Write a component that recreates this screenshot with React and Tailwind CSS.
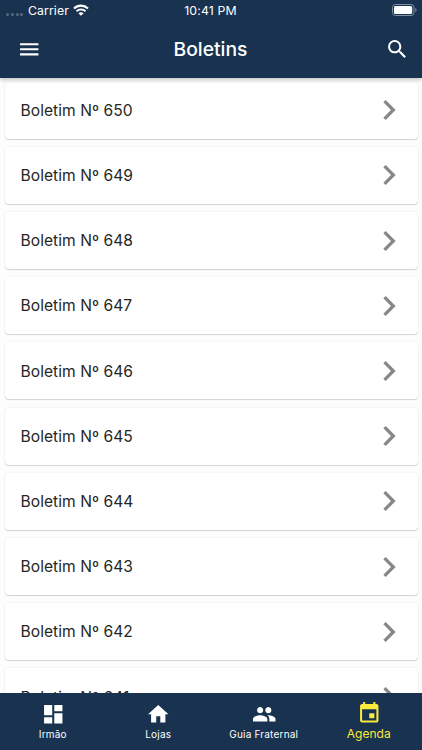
import React from 'react';
import { MdMenu, MdSearch, MdChevronRight, MdDashboard, MdHome, MdPeople, MdEvent } from 'react-icons/md';

const bulletins = [650, 649, 648, 647, 646, 645, 644, 643, 642, 641];

function StatusBar() {
  return (
    <div className="flex h-[21px] items-center justify-between pl-[6px] pr-[5px] text-[12.3px] leading-5">
      <div className="flex w-[130px] items-center">
        <div className="mt-[7px] flex gap-[1.8px]">
          {[0, 1, 2, 3].map((i) => (
            <span key={i} className="size-[3px] rounded-full bg-[#566980]" />
          ))}
        </div>
        <span className="ml-[4.5px] tracking-[0.1px]">Carrier</span>
        <svg className="mb-[1px] ml-[4.5px] h-[12px] w-[16px]" viewBox="0 0 16 12" fill="none" stroke="currentColor">
          <path d="M1 4.4C4.9.65 11.1.65 15 4.4" strokeWidth="2.1" />
          <path d="M3.5 7.2c2.5-2.3 6.5-2.3 9 0" strokeWidth="2" />
          <path d="M8 11.7 5.4 9.2c1.5-1.3 3.7-1.3 5.2 0Z" fill="currentColor" stroke="none" />
        </svg>
      </div>
      <span className="mr-[2px] tracking-[0.15px]">10:41 PM</span>
      <div className="flex w-[130px] justify-end">
        <svg className="mb-[1px] h-[12px] w-[25px]" viewBox="0 0 25 12" fill="none">
          <rect x=".5" y=".5" width="21.5" height="11" rx="3" stroke="#8290a1" />
          <rect x="2" y="2" width="18.2" height="8" rx="1.6" fill="white" />
          <path d="M23.3 4v4c1.6-.5 1.6-3.5 0-4Z" fill="#8290a1" />
        </svg>
      </div>
    </div>
  );
}

function Header() {
  return (
    <header className="relative z-10 h-[77.5px] shrink-0 bg-[#18324f] text-white shadow-[0_2px_4px_rgba(0,0,0,0.22)]">
      <StatusBar />
      <div className="flex h-[56px] items-center justify-between pl-[16.5px] pr-[12.5px]">
        <MdMenu className="size-[24.5px]" />
        <h1 className="mr-[5px] text-[19.3px] font-[460] leading-6">Boletins</h1>
        <MdSearch className="size-[24.5px]" />
      </div>
    </header>
  );
}

function BulletinCard({ number }) {
  return (
    <li className="mx-[4.5px] mb-[8.15px] flex h-[57.05px] shrink-0 items-center justify-between rounded-[4px] bg-white pl-4 pr-[8.5px] shadow-[0_1px_1px_rgba(0,0,0,0.15),0_0_2px_rgba(0,0,0,0.11)]">
      <span className="mt-[1.4px] text-[15.6px] leading-6 tracking-[0.04px] text-[#262626]">Boletim Nº {number}</span>
      <MdChevronRight className="size-10 text-[#888888]" />
    </li>
  );
}

function Tab({ icon: Icon, label, active }) {
  return (
    <button className={active ? 'flex flex-1 flex-col items-center pt-[8.5px] text-[#f9ea3b]' : 'flex flex-1 flex-col items-center pt-[9px] text-white'}>
      <Icon className="size-[24.5px]" />
      <span className={active ? 'mr-[1px] text-[12px] leading-4' : 'text-[10px] leading-4 tracking-[0.2px]'}>{label}</span>
    </button>
  );
}

export default function App() {
  return (
    <div className="flex h-[750px] w-[422px] flex-col overflow-hidden bg-[#fdfdfd] font-['Inter','Liberation_Sans',sans-serif]">
      <Header />
      <ul className="flex min-h-0 flex-1 flex-col overflow-hidden pt-[4.2px]">
        {bulletins.map((number) => (
          <BulletinCard key={number} number={number} />
        ))}
      </ul>
      <nav className="flex h-[57.5px] shrink-0 bg-[#18324f]">
        <Tab icon={MdDashboard} label="Irmão" />
        <Tab icon={MdHome} label="Lojas" />
        <Tab icon={MdPeople} label="Guia Fraternal" />
        <Tab icon={MdEvent} label="Agenda" active />
      </nav>
    </div>
  );
}
